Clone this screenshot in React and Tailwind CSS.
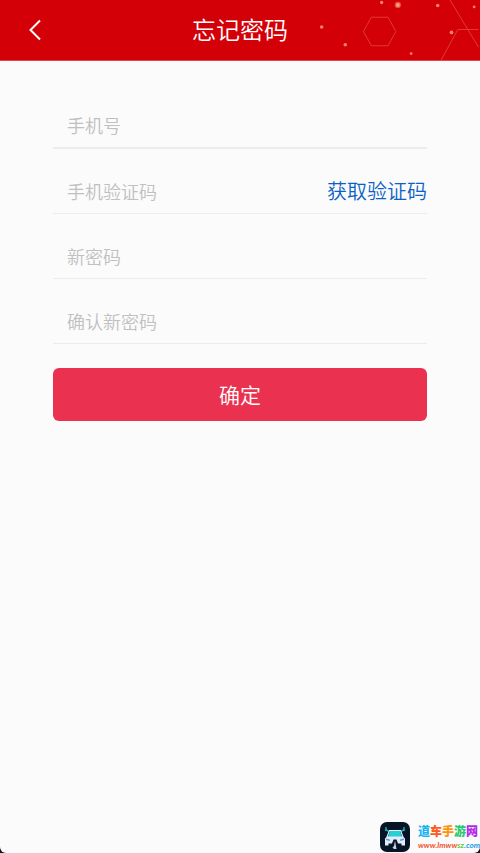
import React from 'react'

const fields = [
    { id: 'phone', label: '手机号', type: 'tel', line: 'h-[66px] border-b-2' },
    { id: 'code', label: '手机验证码', type: 'text', line: 'h-[65px] border-b', action: '获取验证码' },
    { id: 'password', label: '新密码', type: 'password', line: 'h-[65px] border-b' },
    { id: 'confirm', label: '确认新密码', type: 'password', line: 'h-[65px] border-b' },
]

const siteName = [
    { char: '道', color: 'text-[#18b4f0]' },
    { char: '车', color: 'text-[#ff5a1a]' },
    { char: '手', color: 'text-[#ff940c]' },
    { char: '游', color: 'text-[#2cc870]' },
    { char: '网', color: 'text-[#b42ce8]' },
]

const HeaderPattern = () => (
    <svg className="absolute top-0 right-0 h-full" width="180" height="61" viewBox="0 0 180 61" fill="none" aria-hidden="true">
        <g stroke="#e23a2c" strokeWidth="1">
            <path d="M63 32 71 17.500H88L96 32 88 46.500H71Z" />
            <path d="M151 0 180 48" />
            <path d="M142 61 159 30H180" />
        </g>
        <g fill="#f4826a">
            <circle cx="20.500" cy="27.500" r="1.800" />
            <circle cx="44.500" cy="45.500" r="1.800" />
            <circle cx="81.500" cy="2.500" r="1.700" />
            <circle cx="98" cy="5" r="3.200" fill="#e8503c" />
            <circle cx="98" cy="5" r="2" fill="#f79a80" />
            <circle cx="138.500" cy="5.500" r="1.800" />
            <circle cx="152.500" cy="33" r="1.900" />
            <circle cx="111.500" cy="54.500" r="1.400" />
            <circle cx="175.500" cy="7" r="1.400" />
        </g>
    </svg>
)

const CarLogo = () => (
    <svg className="size-[30px]" viewBox="0 0 30 30" fill="none" aria-hidden="true">
        <rect width="30" height="30" rx="7" fill="#071426" />
        <path d="M9 9.500 6 7.500V5M8 9 5 8M21 9.500 24 7.500V5M22 9 25 8" stroke="#1fb7b8" strokeWidth="1.300" />
        <path d="M7 15 9.500 8.500H20.500L23 15" stroke="#e2ecfb" strokeWidth="1.200" />
        <path d="M10 9H20L22 15H8Z" fill="#25d0d6" />
        <path d="M7 14.500H23L25 16.500V23.500H21.500V21.500H18L16.500 17.500H13.500L12 21.500H8.500V23.500H5V16.500Z" fill="#e2ecfb" />
        <path d="M6 16.500 10 17.500V19L6 18ZM24 16.500 20 17.500V19L24 18Z" fill="#5c9ade" />
        <path d="M15 18.500 16.500 27H14L12.500 25.500 14 24Z" fill="#c6d2e6" />
    </svg>
)

const Field = ({ id, label, type, line, action }) => (
    <div className={`flex items-end border-[#ececec] pb-2 ${line}`}>
        <input
            id={id}
            type={type}
            aria-label={label}
            placeholder={label}
            className="h-7 min-w-0 flex-1 bg-transparent pl-3.5 text-[18px] font-[350] text-gray-800 outline-none placeholder:text-[#c0c0c0]"
        />
        {action && (
            <button type="button" className="h-7 text-[20px] leading-7 font-[350] text-[#0c62c4]">{action}</button>
        )}
    </div>
)

const App = () => {
    return (
        <div className="min-h-screen bg-[#10121c] font-['Noto_Sans_CJK_SC',sans-serif]">
            <div className="relative min-h-screen overflow-hidden rounded-b-md bg-[#fbfbfb]">
                <header className="relative flex h-[61px] items-center justify-center border-b border-[#e0484a] bg-[#d40008] pb-0.5">
                    <HeaderPattern />
                    <button type="button" aria-label="返回" className="absolute left-6 flex size-6 items-center justify-center text-white">
                        <svg width="24" height="24" viewBox="0 0 24 24" fill="none" stroke="currentColor" strokeWidth="2" aria-hidden="true">
                            <path d="M16 3.500 6.500 13 16 22.500" />
                        </svg>
                    </button>
                    <h1 className="relative text-[24px] leading-8 font-[350] text-white">忘记密码</h1>
                </header>

                <form className="px-[53px] pt-[22px]" onSubmit={(e) => e.preventDefault()}>
                    {fields.map((field) => (
                        <Field key={field.id} {...field} />
                    ))}
                    <button type="submit" className="mt-6 h-[53px] w-full rounded-md bg-[#ea3150] text-[21px] font-[350] text-white">
                        确定
                    </button>
                </form>

                <a href="#" className="absolute right-0 bottom-px flex items-center gap-2">
                    <CarLogo />
                    <span className="flex flex-col">
                        <span className="flex text-[12px] leading-4 font-black">
                            {siteName.map(({ char, color }) => (
                                <span key={char} className={color}>{char}</span>
                            ))}
                        </span>
                        <span className="font-[Lato,sans-serif] text-[8px] leading-3 font-bold text-[#f0522c] italic">
                            www.lmww<span className="text-[#5cc832]">sz</span><span className="text-[#1c9ce8]">.com</span>
                        </span>
                    </span>
                </a>
            </div>
        </div>
    )
}

export default App
